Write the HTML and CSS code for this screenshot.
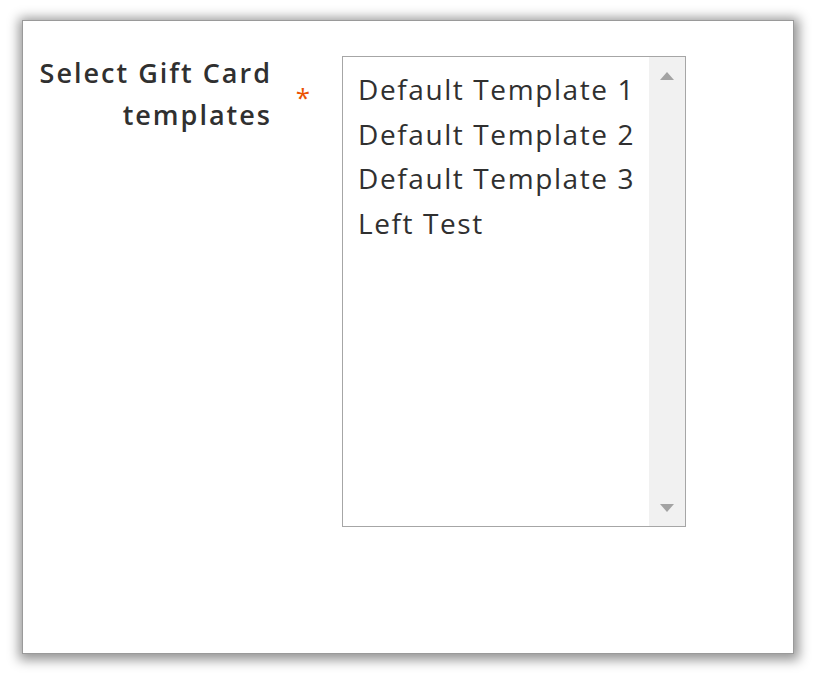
FILE: index.html
```html
<!DOCTYPE html>
<html>
<head>
<meta charset="utf-8">
<link rel="stylesheet" href="styles.css">
</head>
<body>
<div class="card">
  <div class="field">
    <div class="label">Select Gift Card templates</div>
    <div class="req">*</div>
    <div class="listbox">
      <div class="options">
        <div class="opt">Default Template 1</div>
        <div class="opt">Default Template 2</div>
        <div class="opt">Default Template 3</div>
        <div class="opt">Left Test</div>
      </div>
      <div class="scrollbar">
        <span class="arrow up"></span>
        <span class="arrow down"></span>
      </div>
    </div>
  </div>
</div>
</body>
</html>
```

FILE: styles.css
```css
html, body {
  margin: 0;
  padding: 0;
  background: #ffffff;
}
body {
  font-family: "Open Sans", "Liberation Sans", sans-serif;
  color: #303030;
  padding: 21px 23px 22px 23px;
}
.card {
  width: 770px;
  height: 632px;
  box-sizing: border-box;
  background: #fff;
  box-shadow: 0 0 0 1px #9a9a9a, 1px 2px 11px 5px rgba(0, 0, 0, 0.42);
  padding-top: 35px;
}
.field {
  display: flex;
  align-items: flex-start;
}
.label {
  width: 249px;
  text-align: right;
  font-weight: 600;
  font-size: 27px;
  letter-spacing: 2px;
  line-height: 42px;
  margin-top: -4px;
}
.req {
  width: 62px;
  padding-right: 8px;
  text-align: center;
  color: #eb5202;
  font-size: 26px;
  line-height: 26px;
  margin-top: 28px;
}
.listbox {
  width: 344px;
  height: 471px;
  box-sizing: border-box;
  border: 1px solid #a6a6a6;
  display: flex;
}
.options {
  flex: 1;
  padding: 10px 0 0 15px;
  font-size: 28px;
  letter-spacing: 1.6px;
  line-height: 44.5px;
}
.opt {
  white-space: nowrap;
}
.scrollbar {
  width: 36px;
  background: #f1f1f1;
  display: flex;
  flex-direction: column;
  justify-content: space-between;
  align-items: center;
  padding: 15px 0 14px;
}
.arrow {
  width: 0;
  height: 0;
  border-left: 7px solid transparent;
  border-right: 7px solid transparent;
}
.arrow.up {
  border-bottom: 8px solid #a3a3a3;
}
.arrow.down {
  border-top: 8px solid #a3a3a3;
}
```
